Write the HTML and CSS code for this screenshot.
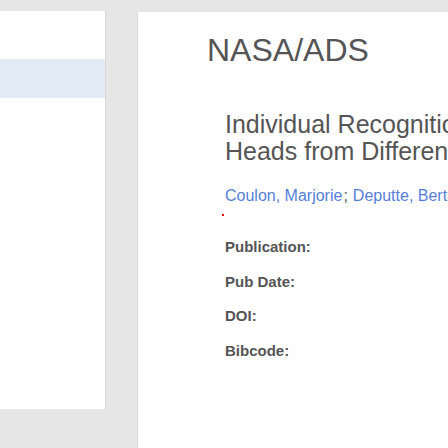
FILE: index.html
```html
<!DOCTYPE html>
<html lang="en">
<head>
<meta charset="utf-8">
<title>NASA/ADS</title>
<link rel="stylesheet" href="styles.css">
</head>
<body>
<div class="page">
  <aside class="sidebar">
    <div class="band"></div>
  </aside>
  <main class="content">
    <h1 class="brand">NASA/ADS</h1>
    <article class="abstract">
      <h2 class="title">Individual Recognition in Domestic Cattle (Bos taurus): Evidence from 2D-Images of<br>Heads from Different Breeds</h2>
      <div class="authors"><a href="#">Coulon, Marjorie</a><span class="sep">;</span><a href="#">Deputte, Bertrand L.</a><span class="sep">;</span><a href="#">Heyman, Yvan</a></div>
      <div class="marker"><span class="dot"></span></div>
      <dl class="meta">
        <dt>Publication:</dt>
        <dt>Pub Date:</dt>
        <dt>DOI:</dt>
        <dt>Bibcode:</dt>
      </dl>
    </article>
  </main>
</div>
</body>
</html>
```
FILE: styles.css
```css
html, body {
  margin: 0;
  padding: 0;
  overflow: hidden;
  height: 100%;
}
body {
  background: #e6e6e6;
  font-family: "Liberation Sans", Arial, sans-serif;
  color: #555555;
}
.page {
  display: flex;
  align-items: flex-start;
  gap: 32px;
  padding-top: 11px;
  width: 1400px;
}
.sidebar {
  width: 106px;
  height: 398px;
  background: #ffffff;
  border-right: 1px solid #d8d8d8;
  padding-top: 48px;
  box-sizing: border-box;
  flex-shrink: 0;
}
.band {
  height: 39px;
  background: #e3ebf7;
}
.content {
  margin-top: 1px;
  flex: 1;
  min-height: 460px;
  background: #ffffff;
  box-shadow: -1px 0 0 #dadada;
  padding: 22px 0 0 69px;
}
.brand {
  margin: 0;
  font-size: 32px;
  line-height: 32px;
  font-weight: normal;
  color: #555555;
}
.abstract {
  padding-left: 18px;
  padding-top: 45px;
}
.title {
  margin: 0;
  font-size: 25px;
  line-height: 27px;
  font-weight: normal;
  color: #555555;
  white-space: nowrap;
}
.authors {
  margin-top: 21px;
  font-size: 16px;
  line-height: 20px;
  white-space: nowrap;
}
.authors a {
  color: #5580d8;
  text-decoration: none;
}
.sep {
  color: #555555;
  margin: 0 5px 0 1px;
}
.marker {
  height: 6px;
  padding-top: 8px;
}
.dot {
  display: block;
  width: 2px;
  height: 2px;
  margin-left: -3px;
  background: #ff0000;
}
.meta {
  margin: 10px 0 0 0;
}
.meta dt {
  font-size: 15px;
  font-weight: bold;
  line-height: 34.6px;
  color: #555555;
}
```
